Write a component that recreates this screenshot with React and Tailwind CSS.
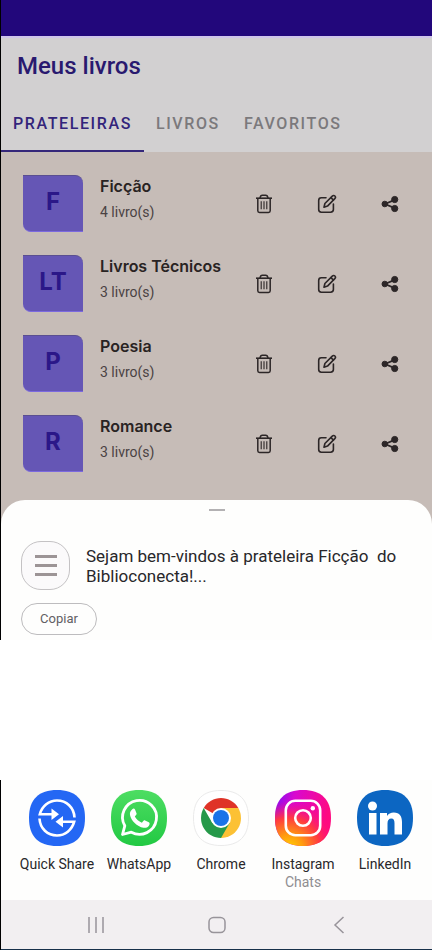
import React from "react";

const shelves = [
  { initials: "F", name: "Ficção", count: 4 },
  { initials: "LT", name: "Livros Técnicos", count: 3 },
  { initials: "P", name: "Poesia", count: 3 },
  { initials: "R", name: "Romance", count: 3 },
];

function TrashIcon() {
  return (
    <svg width="18" height="20" viewBox="0 0 18 20" fill="none" stroke="#2c2627" aria-hidden="true">
      <path d="M1 4.2h16" strokeWidth="1.6" />
      <path d="M5 4c.3-1.900 1.200-2.700 2.400-2.700h3.200c1.200 0 2.100.8 2.400 2.700" strokeWidth="1.5" />
      <path d="M2.800 4.500v12.300c0 1 .7 1.700 1.700 1.700h9c1 0 1.700-.7 1.700-1.700V4.500" strokeWidth="1.500" />
      <path d="M6.200 7.300v8M9 7.300v8M11.800 7.300v8" strokeWidth="1.100" />
    </svg>
  );
}

function EditIcon() {
  return (
    <svg width="20" height="20" viewBox="0 0 20 20" fill="none" stroke="#2c2627" strokeWidth="1.600" strokeLinecap="round" strokeLinejoin="round" aria-hidden="true">
      <path d="M9 3.800H4.300c-1.700 0-2.600.9-2.600 2.600v9.200c0 1.700.9 2.600 2.600 2.600h9.200c1.700 0 2.900-.9 2.900-2.600V10" />
      <path d="m7 13.200.9-3.700 7.400-7.400c.8-.8 1.900-.8 2.600-.1s.7 1.800-.1 2.600l-7.300 7.500Z" />
      <path d="m14 3.600 2.400 2.500" />
    </svg>
  );
}

function ShareIcon() {
  return (
    <svg width="18" height="18" viewBox="0 0 18 18" fill="#2c2627" stroke="#2c2627" aria-hidden="true">
      <path d="M13.700 4.800 4 9l9.700 4.200" fill="none" strokeWidth="1.800" />
      <circle cx="3.800" cy="9" r="2.800" />
      <circle cx="13.700" cy="4.500" r="3.100" />
      <circle cx="13.700" cy="13.500" r="3.100" />
    </svg>
  );
}

const SQUIRCLE = "M28 0C46 0 56 9 56 28S46 56 28 56 0 47 0 28 10 0 28 0Z";

function QuickShareLogo() {
  return (
    <svg width="56" height="56" viewBox="0 0 56 56" aria-hidden="true">
      <path d={SQUIRCLE} fill="#2467f4" />
      <g fill="none" stroke="#fff" strokeWidth="2.600">
        <path d="M45.500 27.500C45 17.500 37.500 10.500 28 10.500c-8 0-15 5.500-17.200 13.800H24" />
        <path d="M10.500 28.500C11 38.500 18.500 45.500 28 45.500c8 0 15-5.500 17.200-13.800H32" />
      </g>
      <path d="m22.500 18.500 7.500 5.800-7.500 5.800ZM34 26l-7.500 5.700L34 37.500Z" fill="#fff" />
    </svg>
  );
}

function WhatsAppLogo() {
  return (
    <svg width="56" height="56" viewBox="0 0 56 56" aria-hidden="true">
      <defs>
        <linearGradient id="wa" x1="0" y1="0" x2="0" y2="1">
          <stop offset="0" stopColor="#4ddd62" />
          <stop offset="1" stopColor="#22c943" />
        </linearGradient>
      </defs>
      <path d={SQUIRCLE} fill="url(#wa)" />
      <path d="m11.500 44.500 2.300-8.700A17 17 0 1 1 20.300 42.200Z" fill="none" stroke="#fff" strokeWidth="2.800" strokeLinejoin="round" />
      <path d="M21.300 19.200c1-.9 2.200-.8 2.700.4l1.500 3.600c.3.800.1 1.400-1.700 3.300 1.700 3 3.900 4.900 7.100 6.200 1.900-2.200 2.300-2.600 3.200-2.200l3.700 1.800c1 .5 1 1.200.5 2.600-.8 2.200-3.500 3.200-5.800 2.800-6.500-1.200-12.500-7.200-13.500-12.800-.4-2.200.6-4.200 2.300-5.700Z" fill="#fff" />
    </svg>
  );
}

function ChromeLogo() {
  return (
    <svg width="56" height="56" viewBox="0 0 56 56" aria-hidden="true">
      <path d="M28 .5C45.700.5 55.500 9.300 55.500 28S45.700 55.500 28 55.500.5 46.700.5 28 10.300.5 28 .5Z" fill="#fff" stroke="#eaeaea" />
      <path d="M28 28 10.700 18A20 20 0 0 1 45.300 18Z" fill="#df3327" />
      <path d="M28 28V18h17.300A20 20 0 0 1 28 48Z" fill="#fcc134" />
      <path d="m36.660 33-8.660 15A20 20 0 0 1 10.700 18l8.640 15Z" fill="#26994a" />
      <circle cx="28" cy="28" r="10" fill="#fff" />
      <circle cx="28" cy="28" r="8" fill="#1b73e8" />
    </svg>
  );
}

function InstagramLogo() {
  return (
    <svg width="56" height="56" viewBox="0 0 56 56" aria-hidden="true">
      <defs>
        <linearGradient id="igBase" x1="0" y1="0" x2="1" y2=".25">
          <stop offset="0" stopColor="#7a10f5" />
          <stop offset=".35" stopColor="#d808d0" />
          <stop offset="1" stopColor="#ff0a80" />
        </linearGradient>
        <radialGradient id="igWarm" cx=".25" cy="1.050" r=".85">
          <stop offset="0" stopColor="#ffd500" />
          <stop offset=".3" stopColor="#ff9a10" />
          <stop offset=".65" stopColor="#ff3b40" />
          <stop offset="1" stopColor="#ff0a80" stopOpacity="0" />
        </radialGradient>
      </defs>
      <path d={SQUIRCLE} fill="url(#igBase)" />
      <path d={SQUIRCLE} fill="url(#igWarm)" />
      <g fill="none" stroke="#fff" strokeWidth="2.600">
        <rect x="10.800" y="10.800" width="34.400" height="34.400" rx="9.500" />
        <circle cx="28" cy="28" r="7.800" />
      </g>
      <circle cx="37.800" cy="18.200" r="2.200" fill="#fff" />
    </svg>
  );
}

function LinkedInLogo() {
  return (
    <svg width="56" height="56" viewBox="0 0 56 56" fill="#fff" aria-hidden="true">
      <path d={SQUIRCLE} fill="#0c66c2" />
      <circle cx="15.500" cy="16" r="4.500" />
      <rect x="12" y="23" width="7.500" height="21.500" />
      <path d="M23 23H30v3c1.300-2.300 3.800-3.600 6.800-3.600 6 0 8.200 3.800 8.200 9.600v12.500h-7.500V33.300c0-3-.8-4.900-3.200-4.900-2.700 0-3.800 2-3.800 5v11.100H23Z" />
    </svg>
  );
}

const apps = [
  { name: "Quick Share", Logo: QuickShareLogo },
  { name: "WhatsApp", Logo: WhatsAppLogo },
  { name: "Chrome", Logo: ChromeLogo },
  { name: "Instagram", detail: "Chats", Logo: InstagramLogo },
  { name: "LinkedIn", Logo: LinkedInLogo },
];

function ShelfRow({ shelf }) {
  return (
    <li className="flex h-[57px] items-center">
      <div className="flex h-[57px] w-[60px] shrink-0 items-center justify-center rounded-tr-lg rounded-bl-lg border-y border-t-[#5a4f91] border-b-[#7b69df] bg-[#6556b5] pb-1 font-['Inter',sans-serif] text-2xl font-bold text-[#2b1788]">
        {shelf.initials}
      </div>
      <div className="ml-[17px] min-w-0 flex-1 self-start">
        <h2 className="whitespace-nowrap font-['Inter',sans-serif] text-base leading-[22px] font-semibold text-[#292323]">
          {shelf.name}
        </h2>
        <p className="mt-1 text-sm leading-[22px] text-[#4a4243]">{shelf.count} livro(s)</p>
      </div>
      <div className="grid shrink-0 grid-cols-[63px_63px_63px]">
        <button type="button" aria-label="Excluir" className="flex h-10 items-center justify-center">
          <TrashIcon />
        </button>
        <button type="button" aria-label="Editar" className="flex h-10 items-center justify-center">
          <EditIcon />
        </button>
        <button type="button" aria-label="Compartilhar" className="flex h-10 items-center justify-center">
          <ShareIcon />
        </button>
      </div>
    </li>
  );
}

export default function App() {
  return (
    <div className="w-full bg-white font-['Roboto',sans-serif]">
      <div className="border-l border-black bg-[#c6bcb7]">
        <div className="h-9 bg-[#22077b]" />
        <header className="border-t-2 border-[#cfc5ea] bg-[#d2d0d1]">
          <h1 className="px-4 pt-3 text-2xl leading-8 font-medium text-[#29196f]">Meus livros</h1>
          <nav className="mt-4 flex h-[54px] text-base font-medium tracking-widest text-[#7b797c]">
            <a href="#prateleiras" className="flex w-[143px] items-center justify-center border-b-2 border-[#35277a] text-[#33247b]">
              PRATELEIRAS
            </a>
            <a href="#livros" className="flex items-center border-b-2 border-transparent px-3">
              LIVROS
            </a>
            <a href="#favoritos" className="flex items-center border-b-2 border-transparent px-3">
              FAVORITOS
            </a>
          </nav>
        </header>

        <ul className="flex flex-col gap-[23px] pt-[23px] pr-[11px] pb-7 pl-[22px]">
          {shelves.map((shelf) => (
            <ShelfRow key={shelf.name} shelf={shelf} />
          ))}
        </ul>

        <section className="h-[140px] rounded-t-3xl bg-[#fefefd] px-5 pt-[9px]">
          <div className="mx-auto h-[2px] w-4 bg-[#b3b1b3]" />
          <div className="mt-[30px] flex items-center">
            <div className="flex h-[49px] w-[49px] shrink-0 flex-col items-center justify-center gap-[6px] rounded-[20px] border border-[#c4c2c4] bg-[#fbfafb]">
              <span className="h-[3px] w-[22px] bg-[#9c9496]" />
              <span className="h-[3px] w-[22px] bg-[#9c9496]" />
              <span className="h-[3px] w-[22px] bg-[#9c9496]" />
            </div>
            <p className="ml-4 text-[17px] leading-5 whitespace-pre-line text-[#28272a]">
              {"Sejam bem-vindos à prateleira Ficção\u00a0 do\nBiblioconecta!..."}
            </p>
          </div>
          <button type="button" className="mt-[13px] h-8 w-[76px] rounded-full border border-[#bdbcbe] text-[13px] text-[#626064]">
            Copiar
          </button>
        </section>
      </div>

      <div className="h-[140px] bg-white" />

      <div className="border-l border-black">
        <div className="grid h-[120px] grid-cols-5 bg-[#fefefd] pt-[10px] pr-[6px] pl-[15px]">
          {apps.map(({ name, detail, Logo }) => (
            <button key={name} type="button" className="flex flex-col items-center text-sm text-[#29282b]">
              <Logo />
              <span className="mt-2 whitespace-nowrap leading-5">{name}</span>
              {detail && <span className="leading-4 text-[#8f8d90]">{detail}</span>}
            </button>
          ))}
        </div>
        <nav className="grid h-[50px] grid-cols-[1fr_50px_1fr] items-center border-b border-[#17304a] bg-[#f2eff1] text-[#98949a]">
          <button type="button" aria-label="Recentes" className="flex justify-center">
            <svg width="18" height="18" viewBox="0 0 18 18" stroke="currentColor" strokeWidth="1.500" aria-hidden="true">
              <path d="M2 1v16M9 1v16M16 1v16" />
            </svg>
          </button>
          <button type="button" aria-label="Início" className="flex justify-center">
            <svg width="18" height="18" viewBox="0 0 18 18" fill="none" stroke="currentColor" strokeWidth="1.500" aria-hidden="true">
              <rect x="1" y="1.500" width="16" height="15" rx="4.500" />
            </svg>
          </button>
          <button type="button" aria-label="Voltar" className="flex justify-center pl-1">
            <svg width="12" height="18" viewBox="0 0 12 18" fill="none" stroke="currentColor" strokeWidth="1.500" aria-hidden="true">
              <path d="m10.500 1-8.500 8 8.500 8" />
            </svg>
          </button>
        </nav>
      </div>
    </div>
  );
}
